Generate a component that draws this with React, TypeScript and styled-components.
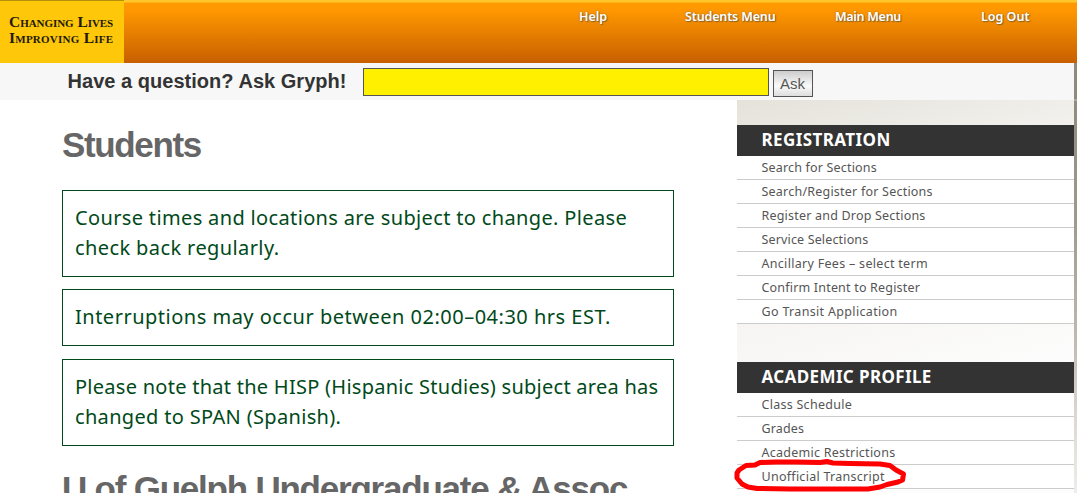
import React from 'react';
import styled, { createGlobalStyle } from 'styled-components';

const GlobalStyle = createGlobalStyle`
  * { box-sizing: border-box; }
  body { margin: 0; background: #fff; overflow: hidden; font-family: "Noto Sans", "Open Sans", sans-serif; }
`;

const Page = styled.div`
  position: relative;
  width: 1077px;
  height: 493px;
  overflow: hidden;
  display: flex;
  flex-direction: column;
`;

const Header = styled.header`
  display: flex;
  flex: 0 0 63px;
  background: linear-gradient(#ffc61f 0, #ffc933 2px, #ff9900 3px, #ff9800 10px, #c86000 62px);
`;

const Logo = styled.div`
  width: 124px;
  padding: 13px 0 0 9px;
  background: #fec709;
  border-top: 1px solid #b88f0c;
  font: bold 15.5px/16px "Liberation Serif", serif;
  font-variant: small-caps;
  color: #1f1a05;
`;

const Line = styled.span<{ $spacing?: number }>`
  display: block;
  width: max-content;
  white-space: nowrap;
  letter-spacing: ${(p) => p.$spacing ?? 0}px;
`;

const Nav = styled.nav`
  display: grid;
  grid-template-columns: 106px 150px 146px 80px;
  margin-left: 455px;
  padding-top: 8px;
`;

const NavLink = styled.a`
  font-size: 12.5px;
  font-weight: 600;
  line-height: 17px;
  color: #fff;
  text-shadow: 1px 1px 1px #8a6520, 0 0 2px #9a6a20;
`;

const Body = styled.div`
  display: flex;
  flex: 1;
  min-height: 0;
`;

const Content = styled.div`
  display: flex;
  flex-direction: column;
  width: 1074px;
`;

const AskBar = styled.form`
  display: flex;
  flex: 0 0 37px;
  align-items: flex-start;
  padding-left: 67.5px;
  background: #f7f7f7;
`;

const AskLabel = styled.label`
  width: 295.5px;
  padding-top: 6px;
  font: bold 20px/24px "Liberation Sans", sans-serif;
  color: #333;
`;

const AskInput = styled.input`
  width: 406px;
  height: 28px;
  margin: 5px 4px 0 0;
  padding: 0 6px;
  border: 1px solid #555;
  border-radius: 0;
  background: #fff000;
`;

const AskButton = styled.button`
  width: 40px;
  height: 27px;
  margin-top: 7px;
  padding: 0 0 0 6px;
  border: 1px solid #555;
  background: linear-gradient(#ccc, #fafafa 60%, #ddd);
  font: 15px/24px "Liberation Sans", sans-serif;
  color: #555;
`;

const Columns = styled.div`
  display: flex;
  flex: 1;
  min-height: 0;
`;

const Main = styled.main`
  width: 737px;
  padding: 25px 63px 0 62px;
`;

const Title = styled.h1`
  margin: 0;
  font: bold 35px/40px "Liberation Sans", sans-serif;
  color: #666;
`;

const Notices = styled.div`
  padding: 25px 0 23px;
`;

const Notice = styled.p<{ $gap?: number }>`
  margin: 0 0 ${(p) => p.$gap ?? 0}px;
  padding: 12px 12px 13px;
  border: 1px solid #00491a;
  font-size: 20px;
  line-height: 30px;
  color: #00491a;
`;

const Sidebar = styled.aside`
  width: 337px;
  padding-top: 25px;
  background: linear-gradient(165deg, #e5e2da 0, #f2f1ed 110px, #f6f5f3 220px, #fdfdfd 340px);
`;

const Menu = styled.section`
  margin-bottom: 38px;
`;

const MenuTitle = styled.h2`
  height: 31px;
  margin: 0;
  padding-left: 24.5px;
  background: #333;
  font-size: 17px;
  font-weight: 700;
  line-height: 30px;
  color: #fff;
`;

const MenuItem = styled.a`
  display: block;
  height: 24px;
  padding-left: 24.5px;
  background: #fff;
  border-bottom: 1px solid #ccc;
  font-size: 12.5px;
  line-height: 23px;
  color: #555;
`;

const PageEdge = styled.div`
  width: 3px;
  background: linear-gradient(#918979 0, #91897b 36px, #c5c1b7 37px, #938b7d 38px, #a09a8c 160px, #bcb8ae 270px, #dddad5 360px, #eeedeb);
`;

const Marker = styled.svg`
  position: absolute;
  left: 730px;
  top: 453px;
`;

type Text = [string, number];

const nav: Text[] = [['Help', 0], ['Students Menu', -0.15], ['Main Menu', -0.28], ['Log Out', 0]];

const notices: { gap: number; lines: Text[] }[] = [
  { gap: 12, lines: [['Course times and locations are subject to change. Please', 0.35], ['check back regularly.', 0.4]] },
  { gap: 13, lines: [['Interruptions may occur between 02:00–04:30 hrs EST.', 0.5]] },
  { gap: 0, lines: [['Please note that the HISP (Hispanic Studies) subject area has', 0.265], ['changed to SPAN (Spanish).', 0.33]] },
];

const menus: { title: Text; items: Text[] }[] = [
  {
    title: ['REGISTRATION', 0.42],
    items: [
      ['Search for Sections', 0.18],
      ['Search/Register for Sections', 0.22],
      ['Register and Drop Sections', 0.2],
      ['Service Selections', 0.15],
      ['Ancillary Fees – select term', 0.3],
      ['Confirm Intent to Register', 0.19],
      ['Go Transit Application', 0.33],
    ],
  },
  {
    title: ['ACADEMIC PROFILE', 0.38],
    items: [['Class Schedule', 0.27], ['Grades', 0.15], ['Academic Restrictions', 0.25], ['Unofficial Transcript', 0.27]],
  },
];

export default function App() {
  return (
    <>
      <GlobalStyle />
      <Page>
        <Header>
          <Logo>
            <Line $spacing={-0.05}>Changing Lives</Line>
            <Line $spacing={0.24}>Improving Life</Line>
          </Logo>
          <Nav>
            {nav.map(([label, spacing]) => (
              <NavLink key={label}><Line $spacing={spacing}>{label}</Line></NavLink>
            ))}
          </Nav>
        </Header>
        <Body>
          <Content>
            <AskBar>
              <AskLabel htmlFor="ask"><Line $spacing={0.03}>Have a question? Ask Gryph!</Line></AskLabel>
              <AskInput id="ask" />
              <AskButton type="button"><Line>Ask</Line></AskButton>
            </AskBar>
            <Columns>
              <Main>
                <Title><Line $spacing={-1.35}>Students</Line></Title>
                <Notices>
                  {notices.map(({ gap, lines }) => (
                    <Notice key={lines[0][0]} $gap={gap}>
                      {lines.map(([text, spacing]) => (
                        <Line key={text} $spacing={spacing}>{text}</Line>
                      ))}
                    </Notice>
                  ))}
                </Notices>
                <Title><Line $spacing={-1.22}>U of Guelph Undergraduate &amp; Assoc</Line></Title>
              </Main>
              <Sidebar>
                {menus.map(({ title, items }) => (
                  <Menu key={title[0]}>
                    <MenuTitle><Line $spacing={title[1]}>{title[0]}</Line></MenuTitle>
                    {items.map(([label, spacing]) => (
                      <MenuItem key={label}><Line $spacing={spacing}>{label}</Line></MenuItem>
                    ))}
                  </Menu>
                ))}
              </Sidebar>
            </Columns>
          </Content>
          <PageEdge />
        </Body>
        <Marker width="185" height="40" viewBox="0 0 185 40" fill="none">
          <path
            d="M103 10 L97 8.5 L90 9.5 L66 9 L46 9 L30 9.5 L25 12 L16 12.5 L9 17 L7 20 L7 25 L12 31 L18 34 L27 35.5 L60 36 L138 36 L150 34 L157 31.5 L168 29 L172.5 27 L173.5 21 L166 17 L160 12.5 L150 11 L120 10.5 Z"
            stroke="#ff0000"
            strokeWidth="5"
            strokeLinejoin="round"
          />
        </Marker>
      </Page>
    </>
  );
}
